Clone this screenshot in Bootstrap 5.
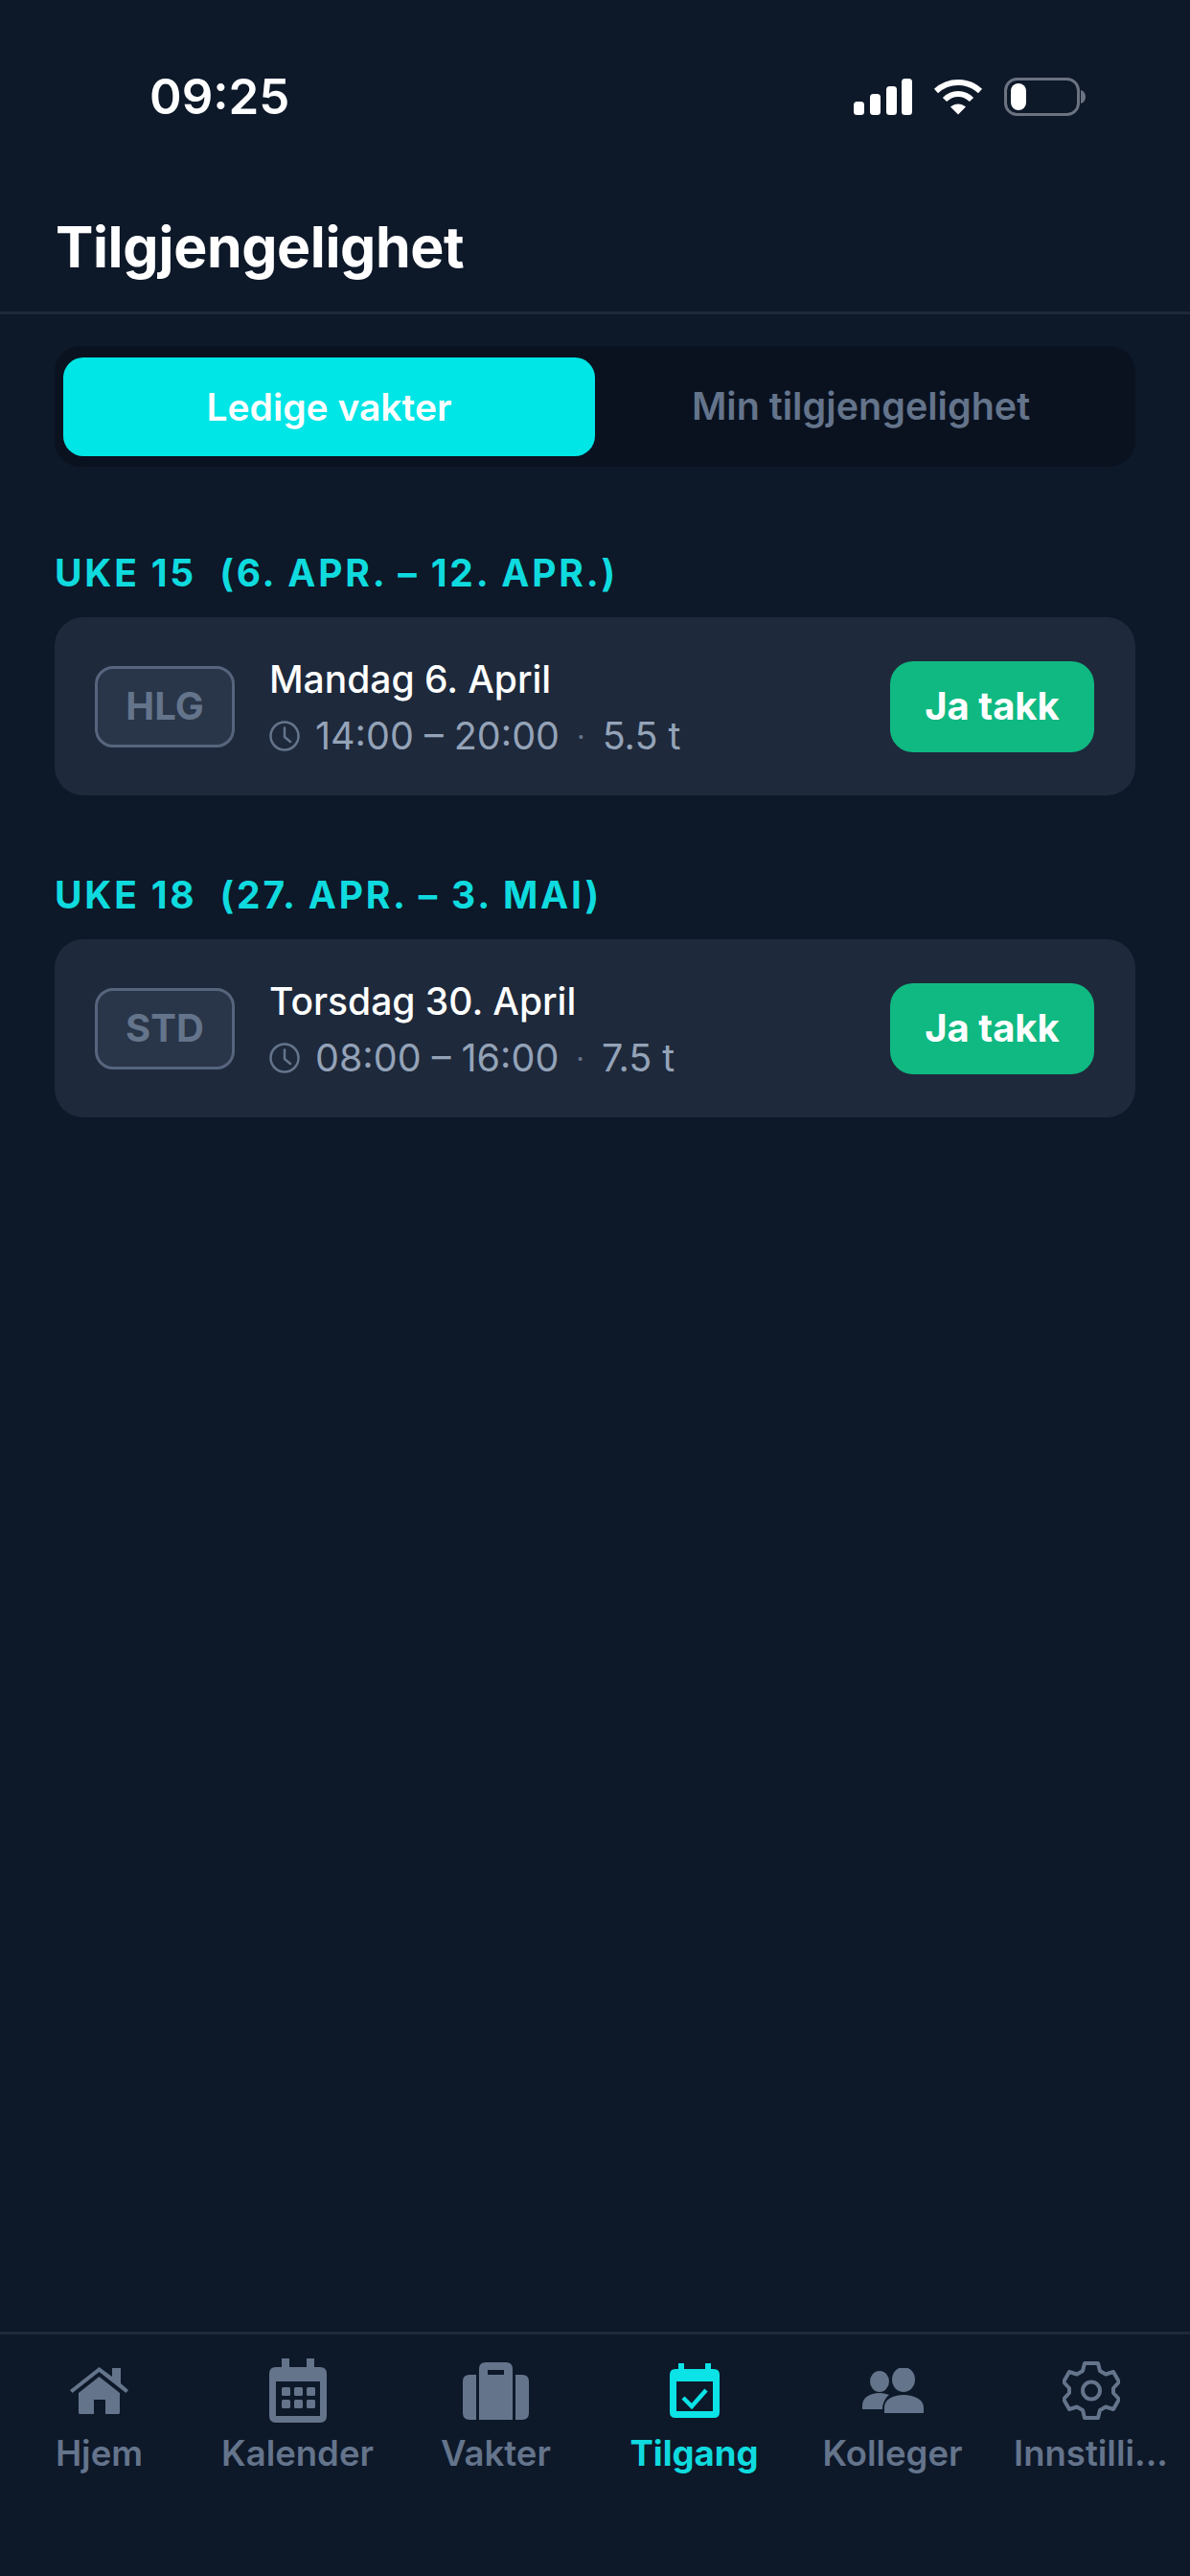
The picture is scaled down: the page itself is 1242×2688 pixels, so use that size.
<!DOCTYPE html>
<html lang="nb">
<head>
    <meta charset="UTF-8">
    <meta name="viewport" content="width=device-width, initial-scale=1.0">
    <title>Tilgjengelighet</title>
    <link rel="stylesheet" href="https://cdn.jsdelivr.net/npm/bootstrap@5.3.0/dist/css/bootstrap.min.css">
    <style>
        html, body { background: #0d1829; }
        body { font-family: Inter, "Liberation Sans", sans-serif; color: #fff; width: 1242px; height: 2688px; }
        .app-shell { height: 2688px; }
        .status-row { height: 122px; padding: 74px 109px 0 156px; }
        .clock-text { font-size: 51px; line-height: 54px; font-weight: 600; width: 300px; }
        .status-icons { gap: 22px; margin-top: 7px; }
        .page-head { height: 206px; padding: 101px 58px 0; border-bottom: 3px solid #1e293b; }
        .page-head h1 { font-size: 59px; line-height: 70px; font-weight: 700; margin: 0; letter-spacing: -0.4px; }
        .content-wrap { padding: 33px 57px 0; }
        .segment-box { background: #0a1220; border-radius: 27px; height: 126px; padding: 12px 9px 10px; }
        .segment-item { flex: 1 1 0; font-size: 39.500px; font-weight: 600; color: #64748b; text-align: center; line-height: 103px; height: 103px; border-radius: 21px; }
        .segment-item.is-on { background: #00e5e5; color: #fff; font-size: 39px; }
        .week-head { font-size: 39px; line-height: 44px; font-weight: 700; color: #0fdbdf; letter-spacing: 2.800px; white-space: pre; margin: 0 0 24px; }
        .shift-card { background: #1e293b; border: 0; border-radius: 30px; height: 186px; padding: 0 43px 0 42px; margin-bottom: 82px; }
        .week-first { margin-top: 89px; }
        .type-tag { width: 146px; height: 85px; border: 3px solid #56657d; border-radius: 19px; background: #293548; color: #64748b; font-size: 40px; font-weight: 700; }
        .shift-info { margin-left: 36px; padding-top: 2px; }
        .shift-day { font-size: 39px; line-height: 46px; font-weight: 500; }
        .shift-time { font-size: 39.500px; line-height: 46px; color: #94a3b8; margin-top: 13px; }
        .shift-time svg { margin-right: 16px; }
        .sep-dot { margin: 0 18px; color: #64748b; font-size: 30px; }
        .accept-btn { width: 213px; height: 95px; background: #10b981; border: 0; border-radius: 24px; color: #fff; font-size: 40px; font-weight: 700; padding: 0; }
        .tab-bar { border-top: 3px solid #1e293b; height: 255px; padding-top: 25px; }
        .tab-item { width: 207px; color: #64748b; font-size: 36.500px; line-height: 44px; font-weight: 600; text-align: center; white-space: nowrap; }
        .tab-item.is-on { color: #0fdbdf; font-weight: 700; }
        .tab-icon { height: 67px; margin-bottom: 10px; }
    </style>
</head>
<body>
<div class="app-shell d-flex flex-column">

    <!-- Status bar -->
    <div class="status-row d-flex justify-content-between align-items-start">
        <div class="clock-text">09:25</div>
        <div class="status-icons d-flex align-items-center">
            <svg width="61" height="38" viewBox="0 0 61 38" fill="#fff">
                <rect x="0" y="24" width="11" height="14" rx="3.500"/>
                <rect x="17" y="16" width="11" height="22" rx="3.500"/>
                <rect x="34" y="8" width="11" height="30" rx="3.500"/>
                <rect x="50" y="0" width="11" height="38" rx="3.500"/>
            </svg>
            <svg width="52" height="38" viewBox="0 0 52 38" fill="none" stroke="#fff" stroke-width="6">
                <path d="M3 13C16 1 36 1 49 13"/>
                <path d="M12 22C20 14 32 14 40 22"/>
                <path d="M18 29.500L26 37.500L34 29.500C29 25.500 23 25.500 18 29.500Z" fill="#fff" stroke="none"/>
            </svg>
            <svg width="85" height="40" viewBox="0 0 85 40" fill="none">
                <rect x="1.500" y="1.500" width="76" height="37" rx="12" stroke="#6b7280" stroke-width="3"/>
                <rect x="7" y="6" width="16" height="28" rx="8" fill="#fff"/>
                <path d="M80 13C83.500 14 85 17 85 20C85 23 83.500 26 80 27Z" fill="#6b7280"/>
            </svg>
        </div>
    </div>

    <!-- Header -->
    <div class="page-head">
        <h1>Tilgjengelighet</h1>
    </div>

    <div class="content-wrap flex-grow-1">
        <div class="segment-box d-flex">
            <div class="segment-item is-on">Ledige vakter</div>
            <div class="segment-item">Min tilgjengelighet</div>
        </div>

        <!-- Uke 15 -->
        <h2 class="week-head week-first">UKE 15  (6. APR. – 12. APR.)</h2>
        <div class="card shift-card flex-row align-items-center">
            <div class="type-tag d-flex align-items-center justify-content-center">HLG</div>
            <div class="shift-info flex-grow-1">
                <div class="shift-day">Mandag 6. April</div>
                <div class="shift-time d-flex align-items-center">
                    <svg width="32" height="32" viewBox="0 0 32 32" fill="none" stroke="#64748b" stroke-width="2.500" stroke-linecap="round" stroke-linejoin="round"><circle cx="16" cy="16" r="14.500"/><path d="M16 7.500V17L22 22"/></svg>
                    <span>14:00 – 20:00</span><span class="sep-dot">·</span><span>5.5 t</span>
                </div>
            </div>
            <button type="button" class="btn accept-btn">Ja takk</button>
        </div>

        <!-- Uke 18 -->
        <h2 class="week-head">UKE 18  (27. APR. – 3. MAI)</h2>
        <div class="card shift-card flex-row align-items-center">
            <div class="type-tag d-flex align-items-center justify-content-center">STD</div>
            <div class="shift-info flex-grow-1">
                <div class="shift-day">Torsdag 30. April</div>
                <div class="shift-time d-flex align-items-center">
                    <svg width="32" height="32" viewBox="0 0 32 32" fill="none" stroke="#64748b" stroke-width="2.500" stroke-linecap="round" stroke-linejoin="round"><circle cx="16" cy="16" r="14.500"/><path d="M16 7.500V17L22 22"/></svg>
                    <span>08:00 – 16:00</span><span class="sep-dot">·</span><span>7.5 t</span>
                </div>
            </div>
            <button type="button" class="btn accept-btn">Ja takk</button>
        </div>
    </div>

    <!-- Bottom tabs -->
    <div class="tab-bar d-flex">
        <div class="tab-item">
            <div class="tab-icon d-flex align-items-center justify-content-center">
                <svg width="61" height="49" viewBox="0 0 61 49" fill="#64748b">
                    <path d="M30.500 0L44 10V1H53V17L61 24L58.500 27L30.500 5L2.500 27L0 24Z"/>
                    <path d="M30.500 10L52 27V47.500Q52 49 50.500 49H37V34H25V49H10.500Q9 49 9 47.500V27Z"/>
                </svg>
            </div>
            Hjem
        </div>
        <div class="tab-item">
            <div class="tab-icon d-flex align-items-center justify-content-center">
                <svg width="60" height="67" viewBox="0 0 60 67" fill="#64748b">
                    <path fill-rule="evenodd" d="M13 0H21V9H39V0H47V9H53Q60 9 60 16V60Q60 67 53 67H7Q0 67 0 60V16Q0 9 7 9H13ZM7 24V60H53V24Z"/>
                    <rect x="13" y="30" width="9" height="9" rx="1.500"/><rect x="26" y="30" width="9" height="9" rx="1.500"/><rect x="39" y="30" width="9" height="9" rx="1.500"/>
                    <rect x="13" y="43" width="9" height="9" rx="1.500"/><rect x="26" y="43" width="9" height="9" rx="1.500"/><rect x="39" y="43" width="9" height="9" rx="1.500"/>
                </svg>
            </div>
            Kalender
        </div>
        <div class="tab-item">
            <div class="tab-icon d-flex align-items-center justify-content-center">
                <svg width="69" height="60" viewBox="0 0 69 60" fill="#64748b">
                    <path d="M14 13V60H7Q0 60 0 53V20Q0 13 7 13Z"/>
                    <path d="M55 13V60H62Q69 60 69 53V20Q69 13 62 13Z"/>
                    <path fill-rule="evenodd" d="M24 0H45Q52 0 52 7V60H17V7Q17 0 24 0ZM26 8V13H43V8Z"/>
                </svg>
            </div>
            Vakter
        </div>
        <div class="tab-item is-on">
            <div class="tab-icon d-flex align-items-center justify-content-center">
                <svg width="52" height="57" viewBox="0 0 52 57" fill="#0be3e6">
                    <path fill-rule="evenodd" d="M9 0H15V6H37V0H43V6H46Q52 6 52 12V51Q52 57 46 57H6Q0 57 0 51V12Q0 6 6 6H9ZM7 19V50H45V19Z"/>
                    <path d="M14 36L23 45L38 28" fill="none" stroke="#0be3e6" stroke-width="4.500"/>
                </svg>
            </div>
            Tilgang
        </div>
        <div class="tab-item">
            <div class="tab-icon d-flex align-items-center justify-content-center">
                <svg width="64" height="47" viewBox="0 0 64 47" fill="#64748b">
                    <ellipse cx="18" cy="14" rx="10" ry="11"/>
                    <ellipse cx="43" cy="12" rx="12" ry="13"/>
                    <path d="M0 43V39C0 31 8 26 18 26C22 26 25 27 28 28C24 31 21 37 21 43Z"/>
                    <path d="M23 47V41C23 33 32 28 43 28C54 28 64 33 64 41V47Z"/>
                </svg>
            </div>
            Kolleger
        </div>
        <div class="tab-item">
            <div class="tab-icon d-flex align-items-center justify-content-center">
                <svg width="60" height="61" viewBox="0 0 60 61" fill="none" stroke="#64748b" stroke-width="4" stroke-linejoin="round">
                    <path d="M23 2H37L39 10L45 13.500L53 11L59 21.500L53 28V33L59 39.500L53 50L45 47.500L39 51L37 59H23L21 51L15 47.500L7 50L1 39.500L7 33V28L1 21.500L7 11L15 13.500L21 10Z"/>
                    <circle cx="30" cy="30.500" r="9"/>
                </svg>
            </div>
            Innstilli...
        </div>
    </div>
</div>
<script src="https://cdn.jsdelivr.net/npm/bootstrap@5.3.0/dist/js/bootstrap.bundle.min.js"></script>
</body>
</html>
